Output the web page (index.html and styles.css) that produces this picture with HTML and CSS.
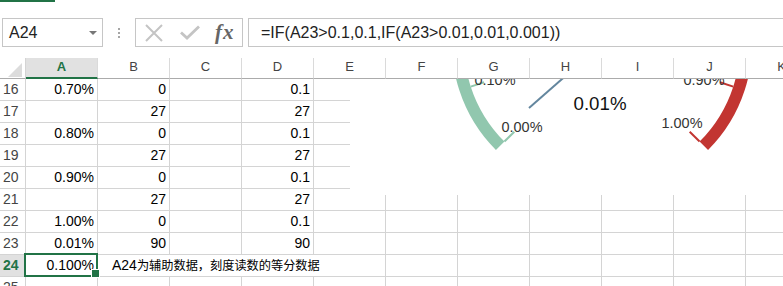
FILE: index.html
```html
<!DOCTYPE html>
<html lang="zh-CN">
<head>
    <meta charset="UTF-8">
    <title>仪表盘 - Excel</title>
    <link rel="stylesheet" href="styles.css">
</head>
<body>
    <div class="tab-line"></div>

    <div class="formula-row">
        <div class="name-box"><span>A24</span><span class="drop"></span></div>
        <div class="grip"><i></i><i></i><i></i></div>
        <div class="fx-buttons">
            <svg class="btn-cancel" width="18" height="18" viewBox="0 0 18 18">
                <path d="M1 1L17 17M17 1L1 17" stroke="#c4c4c4" stroke-width="2" fill="none"/>
            </svg>
            <svg class="btn-enter" width="20" height="15" viewBox="0 0 20 15">
                <path d="M1 7.5L7 13L19 1.5" stroke="#c4c4c4" stroke-width="2.8" fill="none"/>
            </svg>
            <span class="fx">fx</span>
        </div>
        <div class="formula">=IF(A23&gt;0.1,0.1,IF(A23&gt;0.01,0.01,0.001))</div>
    </div>

    <div class="sheet">
        <div class="row head">
            <div class="rh corner"><span class="tri"></span></div>
            <div class="ch sel">A</div><div class="ch">B</div><div class="ch">C</div><div class="ch">D</div><div class="ch">E</div><div class="ch">F</div>
            <div class="ch">G</div><div class="ch">H</div><div class="ch">I</div><div class="ch">J</div><div class="ch">K</div>
        </div>
        <div class="row">
            <div class="rh">16</div><div class="c n">0.70%</div><div class="c n">0</div><div class="c"></div><div class="c n">0.1</div>
            <div class="c"></div><div class="c"></div><div class="c"></div><div class="c"></div><div class="c"></div><div class="c"></div><div class="c"></div>
        </div>
        <div class="row">
            <div class="rh">17</div><div class="c n"></div><div class="c n">27</div><div class="c"></div><div class="c n">27</div>
            <div class="c"></div><div class="c"></div><div class="c"></div><div class="c"></div><div class="c"></div><div class="c"></div><div class="c"></div>
        </div>
        <div class="row">
            <div class="rh">18</div><div class="c n">0.80%</div><div class="c n">0</div><div class="c"></div><div class="c n">0.1</div>
            <div class="c"></div><div class="c"></div><div class="c"></div><div class="c"></div><div class="c"></div><div class="c"></div><div class="c"></div>
        </div>
        <div class="row">
            <div class="rh">19</div><div class="c n"></div><div class="c n">27</div><div class="c"></div><div class="c n">27</div>
            <div class="c"></div><div class="c"></div><div class="c"></div><div class="c"></div><div class="c"></div><div class="c"></div><div class="c"></div>
        </div>
        <div class="row">
            <div class="rh">20</div><div class="c n">0.90%</div><div class="c n">0</div><div class="c"></div><div class="c n">0.1</div>
            <div class="c"></div><div class="c"></div><div class="c"></div><div class="c"></div><div class="c"></div><div class="c"></div><div class="c"></div>
        </div>
        <div class="row">
            <div class="rh">21</div><div class="c n"></div><div class="c n">27</div><div class="c"></div><div class="c n">27</div>
            <div class="c"></div><div class="c"></div><div class="c"></div><div class="c"></div><div class="c"></div><div class="c"></div><div class="c"></div>
        </div>
        <div class="row">
            <div class="rh">22</div><div class="c n">1.00%</div><div class="c n">0</div><div class="c"></div><div class="c n">0.1</div>
            <div class="c"></div><div class="c"></div><div class="c"></div><div class="c"></div><div class="c"></div><div class="c"></div><div class="c"></div>
        </div>
        <div class="row">
            <div class="rh">23</div><div class="c n">0.01%</div><div class="c n">90</div><div class="c"></div><div class="c n">90</div>
            <div class="c"></div><div class="c"></div><div class="c"></div><div class="c"></div><div class="c"></div><div class="c"></div><div class="c"></div>
        </div>
        <div class="row">
            <div class="rh sel">24</div><div class="c n active">0.100%</div>
            <div class="c note">A24<span class="cjk">为辅助数据，刻度读数的等分数据</span></div>
            <div class="c"></div><div class="c"></div><div class="c"></div><div class="c"></div><div class="c"></div><div class="c"></div>
        </div>
        <div class="row">
            <div class="rh">25</div><div class="c"></div><div class="c"></div><div class="c"></div><div class="c"></div>
            <div class="c"></div><div class="c"></div><div class="c"></div><div class="c"></div><div class="c"></div><div class="c"></div><div class="c"></div>
        </div>

        <!-- gauge chart floating over the cells -->
        <div class="chart">
            <svg width="433" height="116" viewBox="0 0 433 116">
                <g fill="none" stroke-width="12">
                    <path d="M150.18 66.82A144 144 0 0 1 109.77 -57.53" stroke="#91c7ae"/>
                    <path d="M109.77 -57.53A144 144 0 0 1 394.23 -57.53" stroke="#63869e"/>
                    <path d="M394.23 -57.53A144 144 0 0 1 353.82 66.82" stroke="#c23531"/>
                </g>
                <g stroke-width="2">
                    <line x1="154.42" y1="62.58" x2="164.32" y2="52.68" stroke="#91c7ae"/>
                    <line x1="120.75" y1="7.64" x2="134.07" y2="3.32" stroke="#91c7ae"/>
                    <line x1="383.25" y1="7.64" x2="369.93" y2="3.32" stroke="#c23531"/>
                    <line x1="349.58" y1="62.58" x2="339.68" y2="52.68" stroke="#c23531"/>
                </g>
                <line x1="252" y1="-35" x2="179" y2="29" stroke="#63869e" stroke-width="2"/>
                <text class="tick" x="172" y="47" textLength="41" lengthAdjust="spacingAndGlyphs">0.00%</text>
                <text class="tick" x="145" y="0" textLength="41" lengthAdjust="spacingAndGlyphs">0.10%</text>
                <text class="tick" x="354" y="0" textLength="41" lengthAdjust="spacingAndGlyphs">0.90%</text>
                <text class="tick" x="332" y="43" textLength="41" lengthAdjust="spacingAndGlyphs">1.00%</text>
                <text class="value" x="250" y="24" textLength="53" lengthAdjust="spacingAndGlyphs">0.01%</text>
            </svg>
        </div>
    </div>
</body>
</html>
```

FILE: styles.css
```css
* {
    margin: 0;
    padding: 0;
    box-sizing: border-box;
}

body {
    width: 783px;
    height: 286px;
    overflow: hidden;
    background-color: #fff;
    font-family: "Liberation Sans", Arial, "Noto Sans CJK SC", sans-serif;
    color: #000;
}

.tab-line {
    width: 55px;
    height: 2px;
    background-color: #217346;
}

/* name box + formula bar */
.formula-row {
    display: flex;
    height: 29px;
    margin-top: 16px;
}

.name-box {
    display: flex;
    align-items: center;
    justify-content: space-between;
    width: 101px;
    margin-left: 2px;
    padding: 0 5px 0 6px;
    border: 1px solid #c6c6c6;
    font-size: 16px;
    color: #222;
}

.name-box .drop {
    width: 0;
    height: 0;
    border-left: 4px solid transparent;
    border-right: 4px solid transparent;
    border-top: 4px solid #777;
}

.grip {
    display: flex;
    flex-direction: column;
    align-items: center;
    justify-content: center;
    gap: 2px;
    width: 32px;
}

.grip i {
    width: 2px;
    height: 2px;
    background-color: #a6a6a6;
}

.fx-buttons {
    display: flex;
    align-items: center;
    width: 108px;
    padding-left: 9px;
    border: 1px solid #c6c6c6;
}

.btn-enter {
    margin-left: 17px;
}

.fx {
    margin-left: 15px;
    font-family: "Liberation Serif", "Times New Roman", serif;
    font-style: italic;
    font-weight: bold;
    font-size: 21px;
    color: #666;
    letter-spacing: 1px;
}

.formula {
    display: flex;
    align-items: center;
    flex: 1;
    margin-left: 5px;
    padding-left: 12px;
    border: 1px solid #c6c6c6;
    border-right: none;
    font-size: 16px;
    color: #222;
    white-space: nowrap;
}

/* the grid */
.sheet {
    position: relative;
    margin-top: 11px;
    height: 228px;
    overflow: hidden;
}

.row {
    display: flex;
    height: 22px;
}

.row.head {
    height: 21px;
}

.rh {
    flex: none;
    width: 26px;
    padding-left: 3px;
    border-right: 1px solid #d4d4d4;
    border-bottom: 1px solid #d4d4d4;
    font-size: 14px;
    line-height: 21px;
    color: #444;
}

.rh.sel {
    background-color: #e1e1e1;
    color: #217346;
    font-weight: bold;
}

.corner {
    display: flex;
    align-items: flex-end;
    justify-content: flex-end;
    padding: 0 3px 1px 0;
    border-bottom: 1px solid #ababab;
}

.tri {
    width: 0;
    height: 0;
    border-left: 14px solid transparent;
    border-bottom: 14px solid #dcdcdc;
}

.ch {
    flex: none;
    width: 72px;
    border-right: 1px solid #dadada;
    border-bottom: 1px solid #ababab;
    text-align: center;
    font-size: 13px;
    line-height: 18px;
    color: #444;
}

.ch.sel {
    background-color: #e1e1e1;
    border-bottom: 2px solid #217346;
    color: #217346;
    font-weight: bold;
}

.c {
    flex: none;
    width: 72px;
    border-right: 1px solid #d4d4d4;
    border-bottom: 1px solid #d4d4d4;
    font-size: 14px;
    line-height: 21px;
    white-space: nowrap;
}

.c.n {
    text-align: right;
    padding-right: 3px;
}

.c.active {
    position: relative;
}

.c.active::before {
    content: "";
    position: absolute;
    left: -2px;
    top: -2px;
    right: -1px;
    bottom: -1px;
    border: 2px solid #217346;
}

.c.active::after {
    content: "";
    position: absolute;
    right: -3px;
    bottom: -2px;
    width: 7px;
    height: 7px;
    background-color: #217346;
    border: 1px solid #fff;
}

.c.note {
    width: 288px;
    padding-left: 14px;
}

.note .cjk {
    font-family: "Noto Sans CJK SC", sans-serif;
    font-size: 12.2px;
}

/* gauge */
.chart {
    position: absolute;
    left: 350px;
    top: 21px;
    width: 433px;
    height: 116px;
    background-color: #fff;
    overflow: hidden;
}

.chart svg {
    display: block;
}

.chart text {
    font-family: "Liberation Sans", Arial, sans-serif;
    text-anchor: middle;
    dominant-baseline: central;
    fill: #333;
}

.chart .tick {
    font-size: 15px;
}

.chart .value {
    font-size: 19px;
    fill: #111;
}
```
